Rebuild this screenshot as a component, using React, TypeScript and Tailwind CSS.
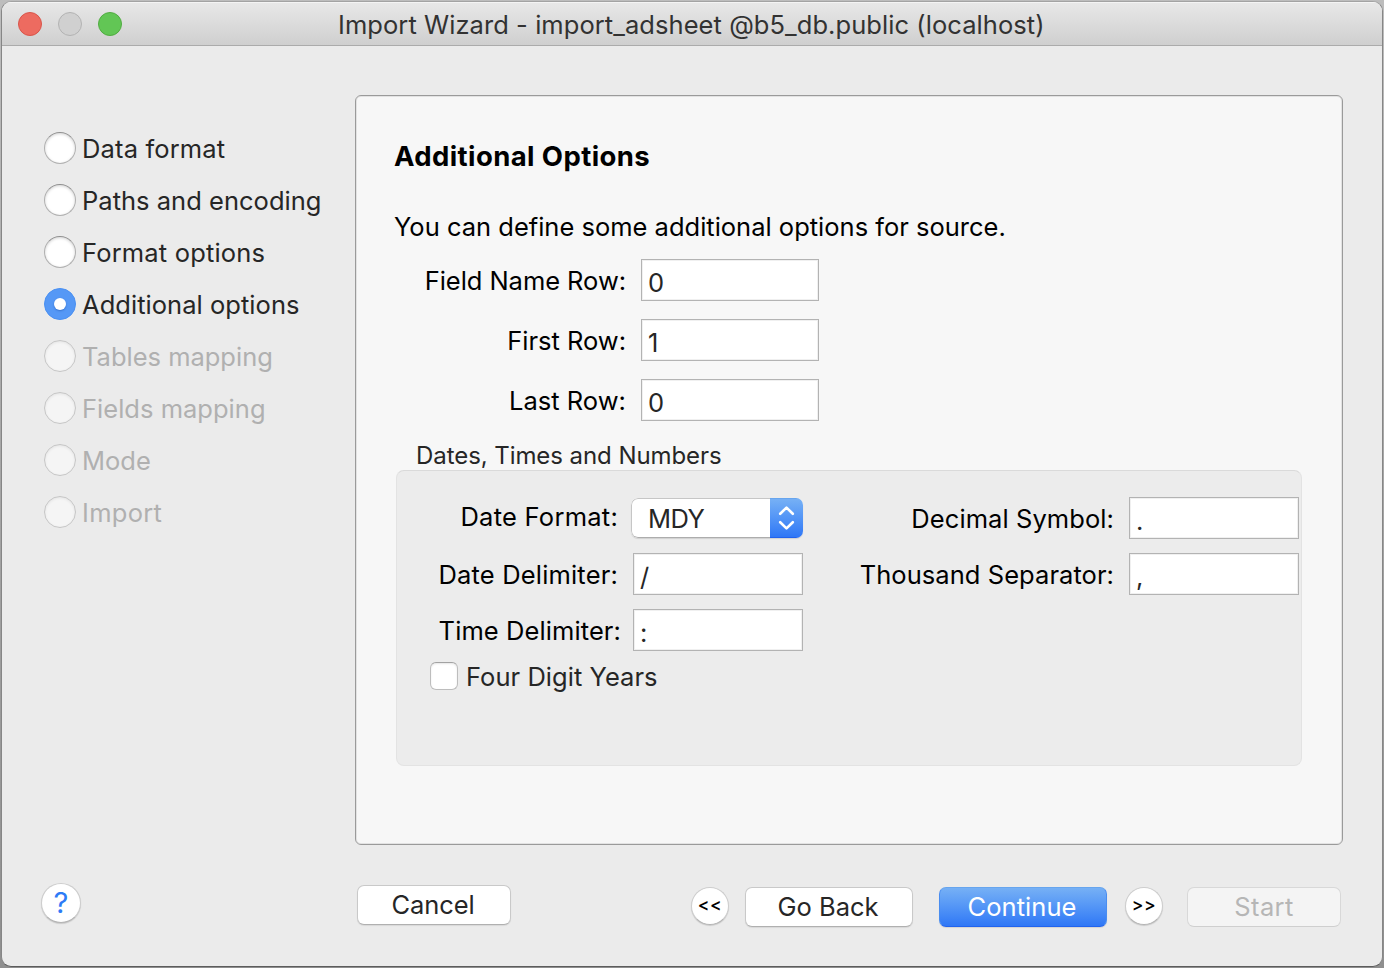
import React from "react";

type Step = { label: string; state: "enabled" | "selected" | "disabled"; spacing: string };

const steps: Step[] = [
  { label: "Data format", state: "enabled", spacing: "tracking-[0.15px]" },
  { label: "Paths and encoding", state: "enabled", spacing: "tracking-[0.02px]" },
  { label: "Format options", state: "enabled", spacing: "tracking-[0.17px]" },
  { label: "Additional options", state: "selected", spacing: "tracking-[0.04px]" },
  { label: "Tables mapping", state: "disabled", spacing: "tracking-[-0.01px]" },
  { label: "Fields mapping", state: "disabled", spacing: "tracking-[0.02px]" },
  { label: "Mode", state: "disabled", spacing: "tracking-[0px]" },
  { label: "Import", state: "disabled", spacing: "tracking-[0.3px]" },
];

function Radio({ state }: { state: Step["state"] }) {
  if (state === "selected") {
    return (
      <span className="flex size-8 items-center justify-center rounded-full border border-[#4a90f2] bg-[#5598f6]">
        <span className="size-3 rounded-full bg-white shadow-[0_1px_2px_rgba(20,70,160,0.45)]" />
      </span>
    );
  }
  if (state === "disabled") {
    return (
      <span className="size-8 rounded-full border border-[#c6c6c6] bg-[#f5f5f5] shadow-[inset_0_1px_3px_rgba(0,0,0,0.08)]" />
    );
  }
  return (
    <span className="size-8 rounded-full border border-[#b0b0b0] border-t-[#8f8f8f] bg-white shadow-[inset_0_1px_3px_rgba(0,0,0,0.18)]" />
  );
}

function TextField({ value, className }: { value: string; className: string }) {
  return (
    <div
      className={`h-[42px] border border-[#b3b3b3] bg-white pt-1 leading-[38px] text-[#262626] shadow-[inset_0_0_0_1px_#f0f0f0] ${className}`}
    >
      {value}
    </div>
  );
}

function RowField({ label, value, spacing }: { label: string; value: string; spacing: string }) {
  return (
    <div className="flex h-[42px] items-start justify-end">
      <span className={`mr-[15px] leading-[44px] ${spacing}`}>{label}</span>
      <TextField value={value} className="w-[178px] pl-[6px]" />
    </div>
  );
}

function PushButton({ label, className }: { label: string; className: string }) {
  return (
    <button
      type="button"
      className={`flex h-10 items-center justify-center rounded-[7px] border border-[#c9c9c9] border-b-[#b0b0b0] bg-white pr-[2px] text-[#262626] shadow-[0_1px_1px_rgba(0,0,0,0.08)] ${className}`}
    >
      {label}
    </button>
  );
}

function RoundButton({ label, className }: { label: string; className: string }) {
  return (
    <button
      type="button"
      className={`flex size-[38px] items-center justify-center rounded-full border border-[#cdcdcd] border-b-[#b4b4b4] bg-white pb-[2px] font-medium shadow-[0_1px_1px_rgba(0,0,0,0.14)] ${className}`}
    >
      {label}
    </button>
  );
}

function TitleBar() {
  return (
    <header className="flex h-11 items-center border-b border-[#ababab] bg-linear-to-b from-[#e8e8e8] to-[#cfcfcf] shadow-[inset_0_1px_0_#f4f4f4]">
      <div className="flex gap-4 pl-4">
        <span className="size-6 rounded-full border border-[#d9554a] bg-[#ed6b60]" />
        <span className="size-6 rounded-full border border-[#b3b3b3] bg-[#d0d0d0]" />
        <span className="size-6 rounded-full border border-[#51ac41] bg-[#62c655]" />
      </div>
      <h1 className="ml-[216px] whitespace-nowrap pt-[3px] leading-10 tracking-[0.06px] text-[#323232]">
        Import Wizard - import_adsheet @b5_db.public (localhost)
      </h1>
    </header>
  );
}

function DateOptions() {
  return (
    <section className="mx-10 flex h-[296px] justify-between rounded-[8px] border border-[#e3e3e3] border-t-[#dadada] bg-[#ececec] pt-[26px] pr-[2px]">
      <div className="w-[406px]">
        <div className="flex h-[42px] items-start justify-end">
          <span className="mr-[13px] leading-10 tracking-[0.25px]">Date Format:</span>
          <div className="mt-px flex h-10 w-[172px] overflow-hidden rounded-[7px] bg-white shadow-[0_1px_1px_rgba(0,0,0,0.12)]">
            <span className="flex-1 rounded-l-[7px] border border-r-0 border-[#c6c6c6] border-b-[#adadad] pl-4 leading-[40px] tracking-[-0.5px] text-[#262626]">
              MDY
            </span>
            <span className="flex w-[33px] items-center justify-center border-t border-b border-t-[#67a5ee] border-b-[#2163ee] bg-linear-to-b from-[#76b0f5] to-[#2f77f6]">
              <svg width="17" height="24" viewBox="0 0 17 24" fill="none" stroke="white" strokeWidth="2.6" strokeLinecap="round" strokeLinejoin="round">
                <path d="M2.2 7.8 8.5 1.6l6.3 6.2" />
                <path d="M2.2 16.2 8.5 22.4l6.3-6.2" />
              </svg>
            </span>
          </div>
        </div>
        <div className="mt-[14px] flex h-[42px] items-start justify-end">
          <span className="mr-[15px] leading-[44px] tracking-[0.18px]">Date Delimiter:</span>
          <TextField value="/" className="w-[170px] pl-[6px]" />
        </div>
        <div className="mt-[14px] flex h-[42px] items-start justify-end">
          <span className="mr-3 leading-[44px] tracking-[0.09px]">Time Delimiter:</span>
          <TextField value=":" className="w-[170px] pl-[6px]" />
        </div>
        <label className="mt-[11px] flex items-center gap-2 pl-[33px] text-[#262626]">
          <span className="size-7 rounded-[6px] border border-[#bdbdbd] border-t-[#a2a2a2] bg-white shadow-[inset_0_1px_2px_rgba(0,0,0,0.1)]" />
          <span className="pt-[2px] leading-[26px] tracking-[0.04px]">Four Digit Years</span>
        </label>
      </div>
      <div className="flex flex-col gap-[14px]">
        <div className="flex h-[42px] items-start justify-end">
          <span className="mr-[15px] leading-[44px] tracking-[0.08px]">Decimal Symbol:</span>
          <TextField value="." className="w-[170px] pl-[6px]" />
        </div>
        <div className="flex h-[42px] items-start justify-end">
          <span className="mr-[15px] leading-[44px] tracking-[0.06px]">Thousand Separator:</span>
          <TextField value="," className="w-[170px] pl-[6px]" />
        </div>
      </div>
    </section>
  );
}

export default function App() {
  return (
    <div className="h-[968px] w-[1384px] overflow-hidden bg-linear-to-b from-[#bdbdbd] to-[#8f8f8f] p-px font-['Inter','Liberation_Sans',sans-serif] text-[25.5px]">
      <div className="flex h-[966px] w-[1382px] flex-col overflow-hidden rounded-[10px] border border-[#868686] border-t-[#a3a3a3] border-b-[#5c5c5c] bg-[#ebebeb]">
        <TitleBar />
        <main className="flex pt-[49px]">
          <nav className="flex w-[353px] flex-col gap-5 pt-[37px] pl-[42px]">
            {steps.map((step) => (
              <div key={step.label} className="flex h-8 items-center gap-[6px]">
                <Radio state={step.state} />
                <span
                  className={`pt-[2px] leading-8 ${step.spacing} ${step.state === "disabled" ? "text-[#b0b0b0]" : "text-[#262626]"}`}
                >
                  {step.label}
                </span>
              </div>
            ))}
          </nav>
          <div className="h-[750px] w-[988px] rounded-[6px] border border-[#9a9a9a] bg-[#f7f7f7] text-black shadow-[inset_0_0_0_1px_#e2e2e2]">
            <h2 className="mt-[44px] ml-[38px] text-[27.5px] leading-8 font-bold tracking-[0.4px]">Additional Options</h2>
            <p className="mt-[39px] ml-[38px] leading-8">
              You can define some additional options for source.
            </p>
            <div className="mt-[16px] flex w-[463px] flex-col gap-[18px]">
              <RowField label="Field Name Row:" value="0" spacing="tracking-[-0.05px]" />
              <RowField label="First Row:" value="1" spacing="tracking-[-0.02px]" />
              <RowField label="Last Row:" value="0" spacing="tracking-[0.03px]" />
            </div>
            <h3 className="mt-5 ml-[60px] text-[24px] leading-[30px] tracking-[-0.07px] text-[#262626]">
              Dates, Times and Numbers
            </h3>
            <div className="-mt-px">
              <DateOptions />
            </div>
          </div>
        </main>
        <footer className="flex items-start pt-[38px] pl-[39px]">
          <button
            type="button"
            className="flex size-10 items-center justify-center rounded-full border border-[#cdcdcd] border-b-[#b4b4b4] bg-white text-[29px] text-[#2d7bf6] shadow-[0_1px_1px_rgba(0,0,0,0.14)]"
          >
            ?
          </button>
          <PushButton label="Cancel" className="mt-[2px] ml-[276px] w-[154px] tracking-[-0.08px]" />
          <RoundButton label="<<" className="mt-1 ml-[180px] text-[17.5px] tracking-[0.5px]" />
          <PushButton label="Go Back" className="mt-1 ml-4 w-[168px]" />
          <button
            type="button"
            className="mt-1 ml-[26px] flex h-10 w-[168px] items-center justify-center rounded-[7px] border border-[#4a8df0] border-t-[#67a5ee] border-b-[#2163ee] bg-linear-to-b from-[#76b0f5] to-[#2f77f6] pr-[2px] tracking-[0.05px] text-white shadow-[0_1px_1px_rgba(0,0,0,0.1)]"
          >
            Continue
          </button>
          <RoundButton label=">>" className="mt-1 ml-[18px] text-[17.5px] tracking-[0.5px]" />
          <button
            type="button"
            disabled
            className="mt-1 ml-6 flex h-10 w-[154px] items-center justify-center rounded-[7px] border border-[#d8d8d8] border-b-[#cfcfcf] bg-[#f4f4f4] tracking-[0.4px] text-[#b6b6b6]"
          >
            Start
          </button>
        </footer>
      </div>
    </div>
  );
}
